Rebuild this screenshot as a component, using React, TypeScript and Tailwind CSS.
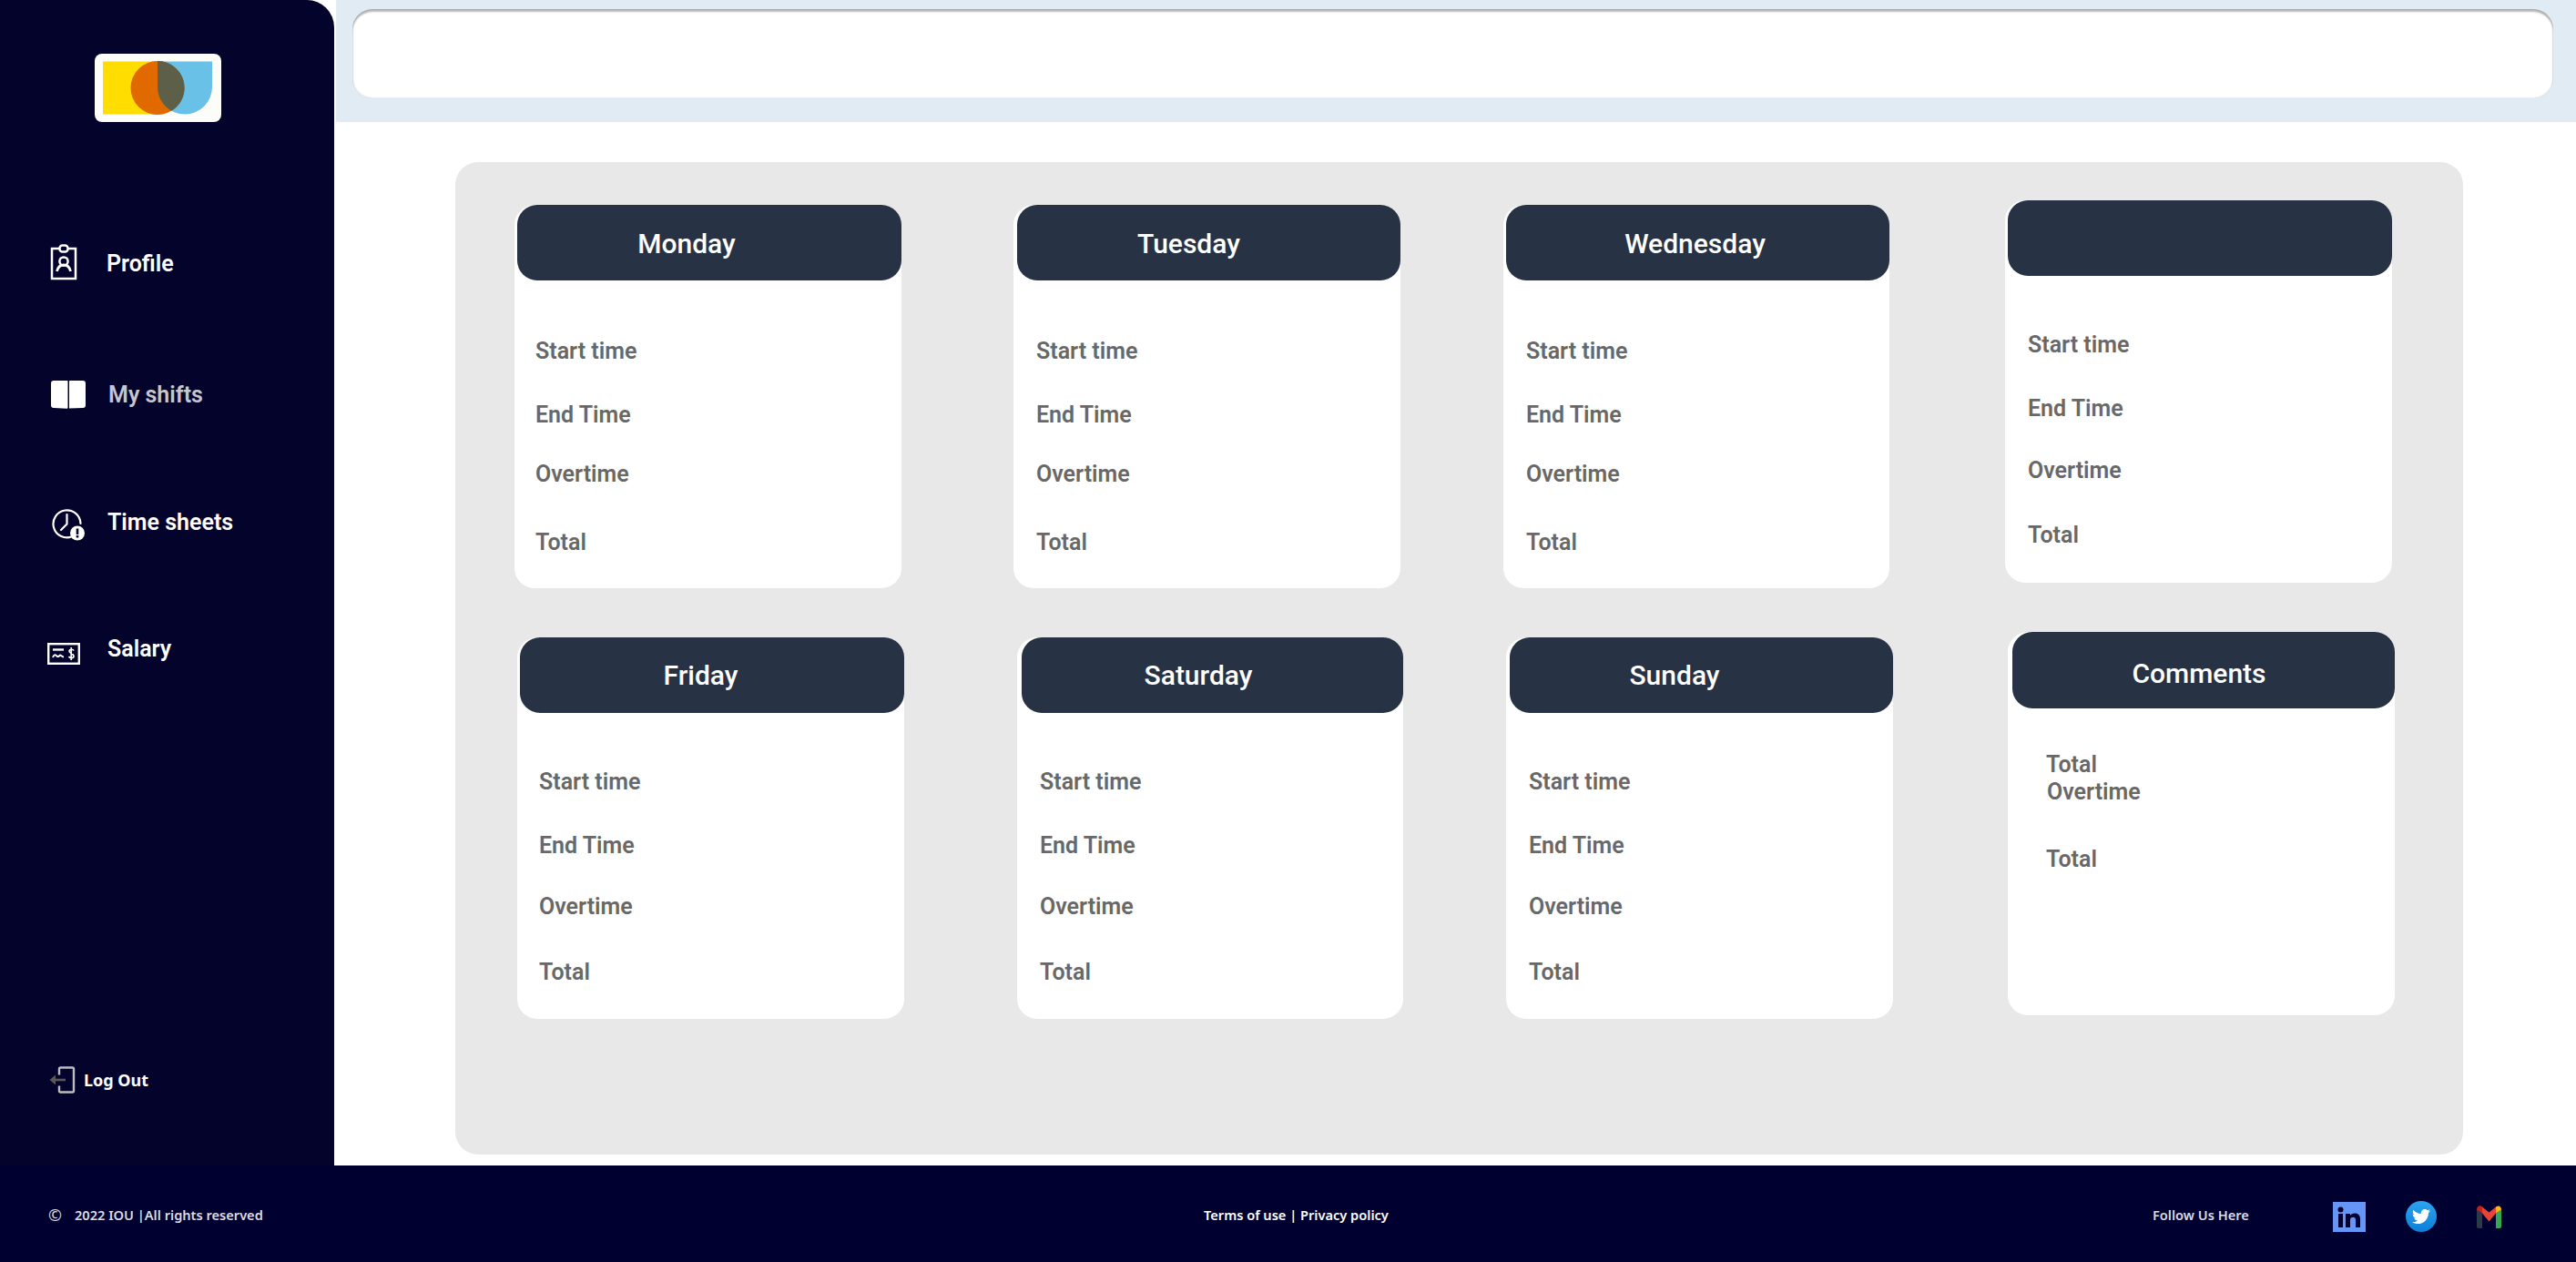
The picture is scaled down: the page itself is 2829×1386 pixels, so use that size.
import { FaTwitter } from "react-icons/fa";

const roboto = "font-['Roboto',sans-serif]";
const noto = "font-['Noto_Sans',sans-serif]";

function Logo() {
  return (
    <div className="ml-[104px] mt-[59px] w-[139px] h-[75px] rounded-[8px] bg-[#fcfdf8]">
      <svg width="139" height="75" viewBox="0 0 139 75">
        <rect x="9" y="8.5" width="60" height="58" fill="#ffdd00" />
        <path d="M69 8.500h60v28a30 30 0 0 1-60 0z" fill="#69c1e8" />
        <circle cx="69" cy="37.500" r="29.500" fill="#e06900" />
        <path d="M69 8A29.500 29.500 0 0 1 84.500 62.700A30 30 0 0 1 69 36.500z" fill="#5e5f48" />
      </svg>
    </div>
  );
}

function ProfileIcon() {
  return (
    <svg width="30" height="40" viewBox="0 0 30 40" fill="none" stroke="#fff" strokeWidth="2.500">
      <path d="M10 5H2v33h26V5h-8" />
      <rect x="10.500" y="1.500" width="9" height="7" rx="3" />
      <circle cx="15" cy="19" r="4.600" />
      <path d="M7.500 30c1-4.500 3.500-7 7.500-7s6.500 2.500 7.500 7" strokeWidth="2.800" />
    </svg>
  );
}

function BookIcon() {
  return (
    <svg width="38" height="31" viewBox="0 0 38 31" fill="#fff">
      <path d="M3 0h14.500c.8 0 1 .4 1 1v29c-.1.600-.5 1-1 .8L3 30a3 3 0 0 1-3-3V3a3 3 0 0 1 3-3z" />
      <path d="M35 0H21c-.8 0-1 .4-1 1v29.500L35 30a3 3 0 0 0 3-3V3a3 3 0 0 0-3-3z" />
    </svg>
  );
}

function ClockIcon() {
  return (
    <svg width="37" height="36" viewBox="0 0 37 36" fill="none" stroke="#fff" strokeWidth="2.200">
      <path d="M22 31.300A15 15 0 1 1 31.500 17" strokeLinecap="round" />
      <path d="M16.500 7v10.500L10 24" strokeLinecap="round" />
      <circle cx="28" cy="27.500" r="8" fill="#fff" stroke="none" />
      <rect x="26.700" y="22.500" width="2.600" height="6.500" fill="#03032b" stroke="none" />
      <rect x="26.700" y="30" width="2.600" height="2.500" fill="#03032b" stroke="none" />
    </svg>
  );
}

function ChequeIcon() {
  return (
    <svg width="36" height="24" viewBox="0 0 36 24" fill="none" stroke="#fff">
      <rect x="1.200" y="1.200" width="33.600" height="21.600" strokeWidth="2.400" />
      <path d="M6 7.500h12" strokeWidth="2.400" />
      <path d="M6 16c1.500-4 3-3 4.500-1.500s3-.5 3.500-1 2 2 4 2" strokeWidth="2" />
      <path d="M29 8.500c-.5-1.500-4.500-2-5 .5s5 2.500 5 5.500-4.500 2.500-5.500.5M26.200 5v14" strokeWidth="1.700" />
    </svg>
  );
}

function LogoutIcon() {
  return (
    <svg width="29" height="30" viewBox="0 0 29 30" fill="none">
      <path d="M11 9.500V3a1.500 1.500 0 0 1 1.500-1.500h13A1.500 1.500 0 0 1 27 3v24a1.500 1.500 0 0 1-1.500 1.500h-13A1.500 1.500 0 0 1 11 27v-5.500" stroke="#bdbdc0" strokeWidth="2.400" />
      <path d="M18 15H6" stroke="#5c5858" strokeWidth="2.600" />
      <path d="M0.500 15L7 9.500v11z" fill="#5c5858" />
    </svg>
  );
}

function LinkedinIcon() {
  return (
    <svg width="36" height="33" viewBox="0 0 36 33">
      <rect width="36" height="33" fill="#6495f7" />
      <rect x="6" y="13" width="5" height="15" fill="#000030" />
      <circle cx="8.500" cy="8.500" r="3" fill="#000030" />
      <path d="M14 13h5v2c1-1.500 3-2.500 5-2.500 4 0 6 2.500 6 6.500v9h-5v-8c0-2-.8-3.200-2.700-3.200S19 18 19 20v8h-5z" fill="#000030" />
    </svg>
  );
}

function GmailIcon() {
  return (
    <svg width="27" height="25" viewBox="0 0 27 25">
      <path d="M0 4l6 4.500V25H2a2 2 0 0 1-2-2z" fill="#2b3a48" />
      <path d="M27 4l-6 4.500V25h4a2 2 0 0 0 2-2z" fill="#34a853" />
      <path d="M0 4.500C0 1 3-.8 5.500 1L6 1.500V8.500z" fill="#c5221f" />
      <path d="M6 1.500l7.500 6 7.500-6v7l-7.500 9-7.500-9z" fill="#ea4335" />
      <path d="M21 1.500C24-.8 27 1 27 4.500L21 8.500z" fill="#fbbc04" />
    </svg>
  );
}

function NavItem({ icon, label, boxCls, textCls }: { icon: React.ReactNode; label: string; boxCls: string; textCls: string }) {
  return (
    <div className={`flex items-center ${boxCls}`}>
      {icon}
      <span className={`${roboto} font-semibold text-[25px] leading-[30px] ${textCls}`}>{label}</span>
    </div>
  );
}

function Sidebar() {
  return (
    <aside className="w-[367px] h-full bg-[#03032b] rounded-tr-[30px] flex flex-col">
      <Logo />
      <NavItem icon={<ProfileIcon />} label="Profile" boxCls="ml-[55px] mt-[134px] h-[40px]" textCls="ml-[32px] mt-[3px] text-white" />
      <NavItem icon={<BookIcon />} label="My shifts" boxCls="ml-[56px] mt-[110px] h-[31px]" textCls="ml-[25px] text-[#c6c6d0]" />
      <NavItem icon={<ClockIcon />} label="Time sheets" boxCls="ml-[57px] mt-[109px] h-[36px]" textCls="ml-[24px] -mt-[4px] text-white" />
      <NavItem icon={<ChequeIcon />} label="Salary" boxCls="ml-[52px] mt-[112px] h-[24px]" textCls="ml-[30px] -mt-[10px] text-white" />
      <div className="ml-[54px] mt-auto mb-[79px] flex items-center h-[30px]">
        <LogoutIcon />
        <span className={`${noto} ml-[9px] font-bold text-[18px] leading-[24px] text-white`}>Log Out</span>
      </div>
    </aside>
  );
}

type CardProps = {
  title?: string;
  cardCls: string;
  headCls: string;
  titleCls: string;
  bodyCls: string;
  labels: { text: string; cls: string }[];
};

const label = "block h-[40px] leading-[40px]";

const rowA = [
  { text: "Start time", cls: "mt-[58px]" },
  { text: "End Time", cls: "mt-[30px]" },
  { text: "Overtime", cls: "mt-[25px]" },
  { text: "Total", cls: "mt-[35px]" },
];
const rowB = [
  { text: "Start time", cls: "mt-[56px]" },
  { text: "End Time", cls: "mt-[30px]" },
  { text: "Overtime", cls: "mt-[28px]" },
  { text: "Total", cls: "mt-[31px]" },
];
const rowC = [
  { text: "Start time", cls: "mt-[56px]" },
  { text: "End Time", cls: "mt-[30px]" },
  { text: "Overtime", cls: "mt-[27px]" },
  { text: "Total", cls: "mt-[32px]" },
];
const rowD = [
  { text: "Total", cls: "mt-[42px]" },
  { text: "Overtime", cls: "-mt-[10px] ml-[1px]" },
  { text: "Total", cls: "mt-[34px]" },
];

function DayCard({ title, cardCls, headCls, titleCls, bodyCls, labels }: CardProps) {
  return (
    <div className={`bg-white rounded-[22px] shrink-0 ${cardCls}`}>
      <div className={`h-[83px] bg-[#283245] rounded-[22px] flex items-center justify-center ${headCls}`}>
        <span className={`${roboto} font-medium text-[30px] leading-[40px] text-white ${titleCls}`}>{title}</span>
      </div>
      <div className={`${roboto} font-semibold text-[25px] text-[#686868] ${bodyCls}`}>
        {labels.map((l, i) => (
          <span key={i} className={`${label} ${l.cls}`}>{l.text}</span>
        ))}
      </div>
    </div>
  );
}

function Panel() {
  return (
    <div className="ml-[131px] mt-[44px] w-[2205px] h-[1090px] bg-[#e8e8e8] rounded-[25px] pt-[42px] flex flex-col">
      <div className="flex items-start h-[426px]">
        <DayCard title="Monday" cardCls="ml-[65px] mt-[5px] w-[425px] h-[421px]" headCls="ml-[3px]" titleCls="mr-[50px] mt-[2px]" bodyCls="pl-[23px]" labels={rowA} />
        <DayCard title="Tuesday" cardCls="ml-[123px] mt-[5px] w-[425px] h-[421px]" headCls="ml-[4px]" titleCls="mr-[44px] mt-[2px]" bodyCls="pl-[25px]" labels={rowA} />
        <DayCard title="Wednesday" cardCls="ml-[113px] mt-[5px] w-[424px] h-[421px]" headCls="ml-[3px]" titleCls="mr-[6px] mt-[2px]" bodyCls="pl-[25px]" labels={rowA} />
        <DayCard cardCls="ml-[127px] w-[425px] h-[420px]" headCls="ml-[3px]" titleCls="" bodyCls="pl-[25px]" labels={rowB} />
      </div>
      <div className="flex items-start mt-[48px]">
        <DayCard title="Friday" cardCls="ml-[68px] mt-[6px] w-[425px] h-[419px]" headCls="ml-[3px]" titleCls="mr-[25px]" bodyCls="pl-[24px]" labels={rowC} />
        <DayCard title="Saturday" cardCls="ml-[124px] mt-[6px] w-[424px] h-[419px]" headCls="ml-[5px]" titleCls="mr-[31px]" bodyCls="pl-[25px]" labels={rowC} />
        <DayCard title="Sunday" cardCls="ml-[113px] mt-[6px] w-[425px] h-[419px]" headCls="ml-[4px]" titleCls="mr-[59px]" bodyCls="pl-[25px]" labels={rowC} />
        <DayCard title="Comments" cardCls="ml-[126px] w-[425px] h-[421px]" headCls="ml-[5px] h-[84px]" titleCls="mr-[10px] mt-[8px]" bodyCls="pl-[42px]" labels={rowD} />
      </div>
    </div>
  );
}

function Footer() {
  const text = `${noto} font-semibold text-[14.6px] leading-[20px] -mt-[4px] text-[#dcdce2]`;
  return (
    <footer className="h-[106px] bg-[#000030] flex items-center shrink-0 pt-[6px]">
      <div className={`w-[1322px] pl-[53px] flex items-center ${text}`}>
        <span className="w-[29px] text-[18px] font-normal">©</span>
        <span>2022 IOU |All rights reserved</span>
      </div>
      <div className={`w-[1042px] ${text} text-white`}>Terms of use | Privacy policy</div>
      <div className={`w-[198px] ${text}`}>Follow Us Here</div>
      <LinkedinIcon />
      <div className="ml-[44px] w-[34px] h-[34px] rounded-full bg-gradient-to-b from-[#2aa4f0] to-[#0a7fd8] flex items-center justify-center">
        <FaTwitter className="text-white text-[20px]" />
      </div>
      <div className="ml-[44px]"><GmailIcon /></div>
    </footer>
  );
}

export default function App() {
  return (
    <div className="w-[2829px] h-[1386px] bg-white flex flex-col overflow-hidden">
      <div className="flex h-[1280px] shrink-0">
        <Sidebar />
        <main className="flex-1 pl-[2px]">
          <div className="h-[134px] bg-[#e1ebf4] pl-[18px] pr-[25px] pt-[10px]">
            <div className="h-[98px] bg-white rounded-[22px] shadow-[inset_0_3px_2px_rgba(0,0,0,0.28),inset_0_0_2px_rgba(0,0,0,0.25)]" />
          </div>
          <Panel />
        </main>
      </div>
      <Footer />
    </div>
  );
}
